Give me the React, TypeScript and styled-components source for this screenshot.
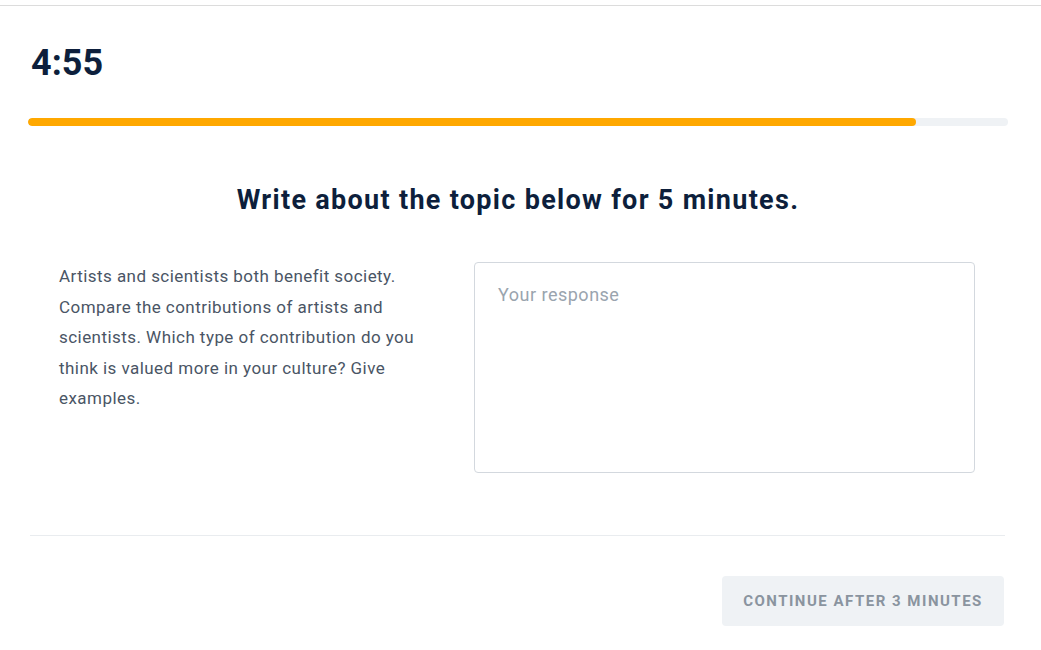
import React from "react";
import styled, { createGlobalStyle } from "styled-components";

const Global = createGlobalStyle`
  html, body { margin: 0; padding: 0; background: #ffffff; }
  body { font-family: Roboto, "Liberation Sans", sans-serif; }
  * { box-sizing: border-box; }
`;

const Page = styled.div`
  padding-top: 5px;
  width: 1041px;
  height: 650px;
  overflow: hidden;
`;

const Frame = styled.div`
  border-top: 1px solid #dcdcdc;
  padding: 0 33px 0 28px;
`;

const Timer = styled.div`
  font-size: 36px;
  font-weight: 700;
  color: #0d1f3c;
  line-height: 42px;
  padding: 36px 0 0 3px;
  height: 112px;
`;

const Track = styled.div`
  height: 8px;
  border-radius: 4px;
  background: #eff2f5;
  overflow: hidden;
`;

const Fill = styled.div`
  height: 100%;
  border-radius: 4px;
  background: #ffa800;
`;

const Heading = styled.h1`
  margin: 58px 0 0;
  text-align: center;
  font-size: 27px;
  line-height: 32px;
  font-weight: 700;
  color: #0d1f3c;
  letter-spacing: 1.3px;
`;

const Body = styled.div`
  display: flex;
  gap: 40px;
  margin-top: 46px;
  padding: 0 33px 0 31px;
`;

const Prompt = styled.p`
  width: 375px;
  margin: -1px 0 0;
  font-size: 17px;
  line-height: 30.6px;
  color: #4a5565;
  letter-spacing: 0.45px;
`;

const Response = styled.textarea`
  flex: 1;
  height: 211px;
  border: 1px solid #d3d8de;
  border-radius: 4px;
  padding: 20px 23px;
  font-family: Roboto, "Liberation Sans", sans-serif;
  font-size: 18px;
  line-height: 24px;
  letter-spacing: 0.5px;
  color: #0d1f3c;
  resize: none;
  outline: none;
  &::placeholder {
    color: #9aa4ae;
  }
`;

const Divider = styled.hr`
  margin: 62px 3px 0 2px;
  border: 0;
  border-top: 1px solid #e9ecef;
`;

const Footer = styled.div`
  display: flex;
  justify-content: flex-end;
  margin-top: 40px;
  padding-right: 4px;
`;

const ContinueButton = styled.button`
  height: 50px;
  width: 282px;
  border: 0;
  border-radius: 4px;
  background: #eff2f5;
  color: #8a949f;
  font-family: Roboto, "Liberation Sans", sans-serif;
  font-size: 15px;
  font-weight: 700;
  letter-spacing: 1.5px;
  text-transform: uppercase;
  cursor: not-allowed;
`;

export default function App() {
  const progress = 0.906;
  return (
    <>
      <Global />
      <Page>
        <Frame>
          <Timer>4:55</Timer>
          <Track>
            <Fill style={{ width: `${progress * 100}%` }} />
          </Track>
          <Heading>Write about the topic below for 5 minutes.</Heading>
          <Body>
            <Prompt>
              Artists and scientists both benefit society. Compare the
              contributions of artists and scientists. Which type of
              contribution do you think is valued more in your culture? Give
              examples.
            </Prompt>
            <Response placeholder="Your response" />
          </Body>
          <Divider />
          <Footer>
            <ContinueButton disabled>Continue after 3 minutes</ContinueButton>
          </Footer>
        </Frame>
      </Page>
    </>
  );
}
